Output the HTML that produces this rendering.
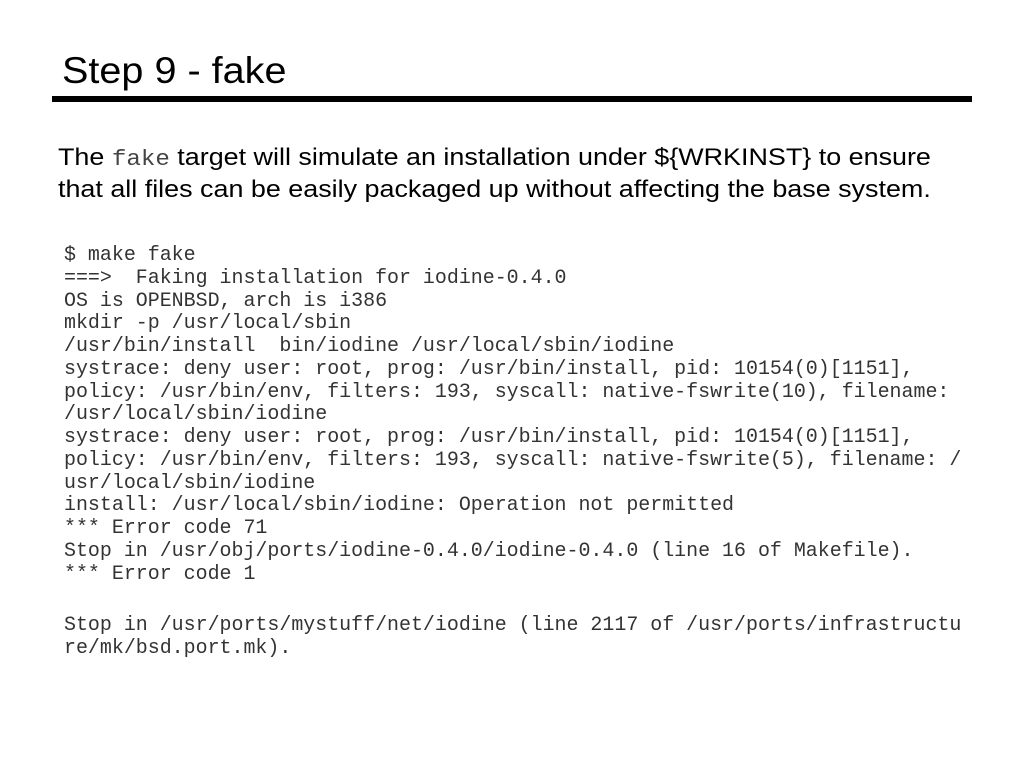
<!DOCTYPE html>
<html><head><meta charset="utf-8"><style>
body{margin:0;width:1024px;height:768px;background:#fff;position:relative;overflow:hidden;font-family:"Liberation Sans",sans-serif;color:#000}
.t{position:absolute;left:62px;top:47px;font-size:37px;line-height:48px;white-space:nowrap;transform:scaleX(1.07);transform-origin:0 0}
.r{position:absolute;left:52px;top:96px;width:920px;height:6px;background:#000}
.p{position:absolute;left:58px;top:143px;font-size:24.5px;line-height:30px;white-space:nowrap;transform:scaleX(1.098);transform-origin:0 0}
.p code{font-family:"Liberation Mono","Courier New",Courier,monospace;font-size:22px;color:#444}
pre{position:absolute;left:64px;top:244px;margin:0;font-family:"Liberation Mono","Courier New",Courier,monospace;font-size:19.95px;line-height:22.75px;color:#333}
</style></head><body>
<div class="t">Step 9 - fake</div>
<div class="r"></div>
<div class="p">The <code>fake</code> target will simulate an installation under ${WRKINST} to ensure<br>that all files can be easily packaged up without affecting the base system.</div>
<pre>$ make fake
===>  Faking installation for iodine-0.4.0
OS is OPENBSD, arch is i386
mkdir -p /usr/local/sbin
/usr/bin/install  bin/iodine /usr/local/sbin/iodine
systrace: deny user: root, prog: /usr/bin/install, pid: 10154(0)[1151],
policy: /usr/bin/env, filters: 193, syscall: native-fswrite(10), filename:
/usr/local/sbin/iodine
systrace: deny user: root, prog: /usr/bin/install, pid: 10154(0)[1151],
policy: /usr/bin/env, filters: 193, syscall: native-fswrite(5), filename: /
usr/local/sbin/iodine
install: /usr/local/sbin/iodine: Operation not permitted
*** Error code 71
Stop in /usr/obj/ports/iodine-0.4.0/iodine-0.4.0 (line 16 of Makefile).
*** Error code 1
<span style="display:block;height:6px"></span>
Stop in /usr/ports/mystuff/net/iodine (line 2117 of /usr/ports/infrastructu
re/mk/bsd.port.mk).</pre>
</body></html>
